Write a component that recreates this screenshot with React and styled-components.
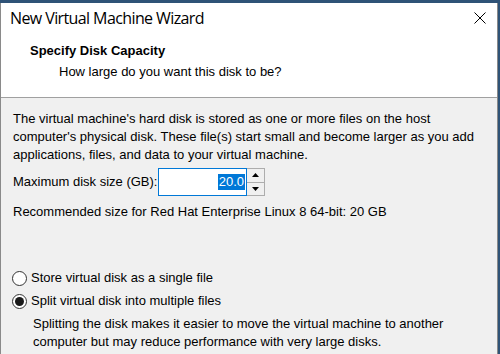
import React from 'react';
import styled, { createGlobalStyle } from 'styled-components';

const GlobalStyle = createGlobalStyle`
  html, body {
    margin: 0;
    padding: 0;
    background: #2f5377;
  }
  body {
    font-family: "Liberation Sans", Arial, sans-serif;
  }
`

const Desktop = styled.div`
  width: 500px;
  height: 354px;
  overflow: hidden;
  padding-top: 3px;
  box-sizing: border-box;
  background: #2f5377;
`

const Window = styled.div`
  width: 498px;
  height: 400px;
  box-sizing: border-box;
  border-left: 1px solid #8a8a8a;
  border-right: 1px solid #8a8a8a;
  background: #f0f0f0;
  display: flex;
  flex-direction: column;
`

const TitleBar = styled.div`
  height: 30px;
  background: #ffffff;
  display: flex;
  align-items: center;
  justify-content: space-between;
  padding: 0 11px 0 9px;
`

const Title = styled.div`
  font-family: "Open Sans", "Noto Sans", sans-serif;
  font-size: 16px;
  letter-spacing: -0.6px;
  color: #000;
`

const CloseIcon = styled.svg`
  width: 12px;
  height: 12px;
  display: block;
`

const Header = styled.div`
  background: #ffffff;
  height: 65px;
  padding: 10px 0 0 29px;
  box-sizing: border-box;
  border-bottom: 1px solid #a0a0a0;
`

const HeaderTitle = styled.div`
  font-size: 13px;
  font-weight: bold;
  color: #000;
  line-height: 16px;
`

const HeaderSub = styled.div`
  font-size: 13px;
  color: #000;
  line-height: 16px;
  margin: 5px 0 0 29px;
`

const Body = styled.div`
  padding: 12px 12px 0 12px;
  font-size: 13px;
  color: #000;
  line-height: 18px;
`

const Paragraph = styled.p`
  margin: 0;
`

const SizeRow = styled.div`
  display: flex;
  align-items: center;
  margin-top: 4px;
`

const Label = styled.span`
  width: 145px;
  flex-shrink: 0;
  white-space: nowrap;
`

const Spinner = styled.div`
  display: flex;
  height: 28px;
`

const InputBox = styled.div`
  width: 86px;
  border: 1px solid #0078d7;
  background: #fff;
  display: flex;
  align-items: center;
  justify-content: flex-end;
  padding-right: 1px;
`

const Selected = styled.span`
  background: #0078d7;
  color: #fff;
  line-height: 16px;
  padding: 0 1px;
`

const Arrows = styled.div`
  width: 17px;
  border: 1px solid #adadad;
  border-left: none;
  display: flex;
  flex-direction: column;
`

const ArrowButton = styled.div`
  flex: 1;
  display: flex;
  align-items: center;
  justify-content: center;
  background: #f0f0f0;
  border-top: ${p => (p.$bottom ? '1px solid #adadad' : 'none')};
`

const Recommend = styled.p`
  margin: 7px 0 0 0;
`

const Options = styled.div`
  margin-top: 48px;
  display: flex;
  flex-direction: column;
  gap: 5px;
`

const RadioRow = styled.label`
  display: flex;
  align-items: center;
  gap: 4px;
  margin-left: -1px;
`

const RadioCircle = styled.span`
  width: 13px;
  height: 13px;
  border: 1px solid #333;
  border-radius: 50%;
  background: #fff;
  display: flex;
  align-items: center;
  justify-content: center;
`

const RadioDot = styled.span`
  width: 9px;
  height: 9px;
  border-radius: 50%;
  background: #1a1a1a;
`

const Note = styled.p`
  margin: 5px 0 0 20px;
`

const Arrow = ({ up }) => (
  <svg width="7" height="4" viewBox="0 0 7 4">
    <polygon points={up ? '3.5,0 7,4 0,4' : '0,0 7,0 3.5,4'} fill="#000" />
  </svg>
);

export default function App() {
  return (
    <Desktop>
      <GlobalStyle />
      <Window>
        <TitleBar>
          <Title>New Virtual Machine Wizard</Title>
          <CloseIcon viewBox="0 0 12 12">
            <path d="M0.5 0.5 L11.5 11.5 M11.5 0.5 L0.5 11.5" stroke="#000" strokeWidth="1" />
          </CloseIcon>
        </TitleBar>
        <Header>
          <HeaderTitle>Specify Disk Capacity</HeaderTitle>
          <HeaderSub>How large do you want this disk to be?</HeaderSub>
        </Header>
        <Body>
          <Paragraph>
            The virtual machine's hard disk is stored as one or more files on the host
            computer's physical disk. These file(s) start small and become larger as you add
            applications, files, and data to your virtual machine.
          </Paragraph>
          <SizeRow>
            <Label>Maximum disk size (GB):</Label>
            <Spinner>
              <InputBox>
                <Selected>20.0</Selected>
              </InputBox>
              <Arrows>
                <ArrowButton><Arrow up /></ArrowButton>
                <ArrowButton $bottom><Arrow /></ArrowButton>
              </Arrows>
            </Spinner>
          </SizeRow>
          <Recommend>Recommended size for Red Hat Enterprise Linux 8 64-bit: 20 GB</Recommend>
          <Options>
            <RadioRow>
              <RadioCircle />
              <span>Store virtual disk as a single file</span>
            </RadioRow>
            <RadioRow>
              <RadioCircle><RadioDot /></RadioCircle>
              <span>Split virtual disk into multiple files</span>
            </RadioRow>
          </Options>
          <Note>
            Splitting the disk makes it easier to move the virtual machine to another
            <br />
            computer but may reduce performance with very large disks.
          </Note>
        </Body>
      </Window>
    </Desktop>
  );
}
